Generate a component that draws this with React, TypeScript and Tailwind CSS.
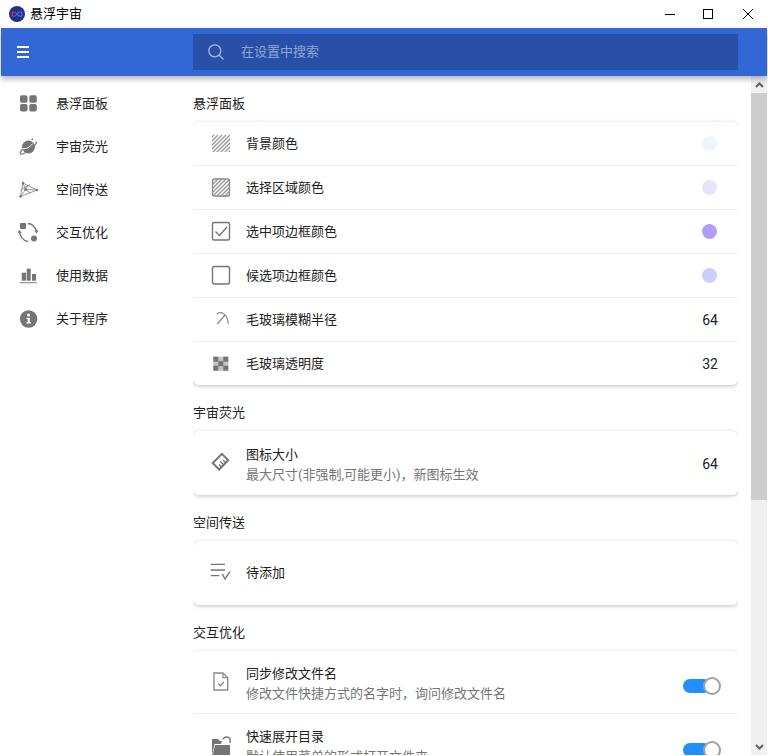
import type { ReactNode } from "react"

const GRAY = "#757575"

function Icon({ children, size = 24 }: { children: ReactNode; size?: number }) {
  return (
    <svg width={size} height={size} viewBox="0 0 24 24" fill="none">
      {children}
    </svg>
  )
}

function Hatch() {
  return (
    <>
      {[-20, -16, -12, -8, -4, 0, 4, 8, 12, 16, 20].map((o) => (
        <path key={o} d={`M${3 + o} 21 L${21 + o} 3`} stroke="#999" strokeWidth="1.300" />
      ))}
    </>
  )
}

const navIcons: Record<string, ReactNode> = {
  grid: (
    <Icon>
      <rect x="4" y="3.300" width="7.500" height="7.500" rx="1.800" fill={GRAY} />
      <rect x="13.300" y="3.300" width="7.500" height="7.500" rx="1.800" fill={GRAY} />
      <rect x="4" y="12" width="7.500" height="7.500" rx="1.800" fill={GRAY} />
      <rect x="13.300" y="12" width="7.500" height="7.500" rx="1.800" fill={GRAY} />
    </Icon>
  ),
  planet: (
    <Icon>
      <circle cx="12.500" cy="12" r="6.500" fill={GRAY} />
      <path d="M6.500 14.500C4.500 16.500 3.800 18 4.500 18.800s3.500-.2 7-2.300 7-5.300 8.300-7.500c.6-1 .7-2 .3-2.500" stroke={GRAY} strokeWidth="1.200" />
      <path d="M6.800 13.500c3 .8 7-1.300 10-5" stroke="#fff" strokeWidth="1" />
      <circle cx="16.300" cy="4.300" r="0.900" fill={GRAY} />
    </Icon>
  ),
  mesh: (
    <Icon>
      <path d="M7 5 L21 12 L4.500 18.500 Z M7 5 L9.500 11.500 L4.500 18.500 M9.500 11.500 L21 12 M12 7.500 L9.500 11.500 L14 15 M4.500 12 L14 6.500" stroke="#8a8a8a" strokeWidth="0.900" />
      <circle cx="7" cy="5" r="1.200" fill={GRAY} />
      <circle cx="4.500" cy="18.500" r="1.200" fill={GRAY} />
      <circle cx="21" cy="12" r="1.200" fill={GRAY} />
      <circle cx="9.500" cy="11.500" r="1.300" fill={GRAY} />
    </Icon>
  ),
  sync: (
    <Icon>
      <rect x="4" y="2" width="6" height="6" rx="0.800" fill={GRAY} />
      <circle cx="18" cy="17.500" r="3" fill={GRAY} />
      <path d="M12 2.500c4.500.3 8 4 8.500 8.500" stroke={GRAY} strokeWidth="1.300" />
      <path d="M18.800 9.500 L20.500 11.500 L22 9.500" stroke={GRAY} strokeWidth="1.100" />
      <path d="M3.500 10c0 5 3.500 10 8.500 10.500" stroke={GRAY} strokeWidth="1.300" />
      <path d="M2 11.800 L3.500 9.800 L5.200 11.800" stroke={GRAY} strokeWidth="1.100" />
    </Icon>
  ),
  bars: (
    <Icon>
      <rect x="5.700" y="8.700" width="4.300" height="8" fill={GRAY} />
      <rect x="10.700" y="4.700" width="4" height="12" fill={GRAY} />
      <rect x="16" y="10" width="4" height="6.700" fill={GRAY} />
      <rect x="4" y="18" width="16.700" height="1.300" fill="#999" />
    </Icon>
  ),
  info: (
    <Icon>
      <circle cx="12.600" cy="12" r="8.700" fill={GRAY} />
      <circle cx="12.600" cy="8" r="1.500" fill="#fff" />
      <path d="M10.500 10.800 H13.800 V15 H15 V16.500 H10.500 V15 H11.700 V12.300 H10.500 Z" fill="#fff" />
    </Icon>
  ),
}

const navItems = [
  { icon: "grid", label: "悬浮面板" },
  { icon: "planet", label: "宇宙荧光" },
  { icon: "mesh", label: "空间传送" },
  { icon: "sync", label: "交互优化" },
  { icon: "bars", label: "使用数据" },
  { icon: "info", label: "关于程序" },
]

const hatchIcon = (
  <Icon>
    <clipPath id="hatch-clip">
      <rect x="3" y="2" width="18" height="18" />
    </clipPath>
    <g clipPath="url(#hatch-clip)">
      <Hatch />
    </g>
  </Icon>
)

const hatchBoxIcon = (
  <Icon>
    <clipPath id="hatch-box-clip">
      <rect x="3" y="2.500" width="18" height="18" rx="2" />
    </clipPath>
    <g clipPath="url(#hatch-box-clip)">
      <Hatch />
    </g>
    <rect x="3.500" y="3" width="17" height="17" rx="2" stroke="#8a8a8a" strokeWidth="1.300" />
  </Icon>
)

const checkBoxIcon = (
  <Icon>
    <rect x="3.500" y="2.500" width="17" height="17.500" rx="1.500" stroke={GRAY} strokeWidth="1.400" />
    <path d="M6.500 11.500 L10.500 15.500 L18 7" stroke={GRAY} strokeWidth="1.400" />
  </Icon>
)

const emptyBoxIcon = (
  <Icon>
    <rect x="3.500" y="2.500" width="17" height="17.500" rx="2" stroke={GRAY} strokeWidth="1.400" />
  </Icon>
)

const pickIcon = (
  <Icon>
    <path d="M7.700 6C12 3 18.500 5 19.300 16" stroke="#8a8a8a" strokeWidth="1.200" />
    <path d="M16 7 L8.300 16" stroke="#8a8a8a" strokeWidth="1.300" />
  </Icon>
)

const checkerIcon = (
  <Icon>
    <rect x="4.300" y="4.700" width="15" height="14" fill="#c4c4c4" />
    {[
      [4.300, 4.700], [14.300, 4.700], [9.300, 9.200], [4.300, 13.700], [14.300, 13.700],
    ].map(([x, y]) => (
      <rect key={`${x}-${y}`} x={x} y={y} width="5" height="5" fill={GRAY} />
    ))}
  </Icon>
)

const rulerIcon = (
  <Icon>
    <g transform="rotate(-45 11.500 10.700)">
      <rect x="5" y="6.200" width="13" height="9" stroke={GRAY} strokeWidth="2" />
      <path d="M8.500 15 V11.500 M11.500 15 V10.500 M14.500 15 V11.500" stroke={GRAY} strokeWidth="1.400" />
    </g>
  </Icon>
)

const listCheckIcon = (
  <Icon>
    <path d="M1.700 3.300 H16 M1.700 9 H16 M1.700 14.700 H10.300" stroke={GRAY} strokeWidth="1.300" />
    <path d="M13.300 13 L16 18 L21 10.700" stroke={GRAY} strokeWidth="1.400" />
  </Icon>
)

const fileCheckIcon = (
  <Icon>
    <path d="M5 3 H14 L18.700 7.700 V20 H5 Z" stroke="#8a8a8a" strokeWidth="1.400" />
    <path d="M14 3 V7.700 H18.700" stroke="#8a8a8a" strokeWidth="1.200" />
    <path d="M9 13.500 L11.300 15.800 L15 11.800" stroke="#8a8a8a" strokeWidth="1.300" />
  </Icon>
)

const folderIcon = (
  <Icon>
    <path d="M3 22 V5 H9 L11 7 H13 L12 10 H5.500 L3 22 Z" fill={GRAY} />
    <path d="M6 11 H21 V22 H3.500 Z" fill={GRAY} />
    <path d="M14 5 C16 2.500 19 2.500 21 4.500 L21 9" stroke={GRAY} strokeWidth="1.400" />
  </Icon>
)

function Swatch({ color }: { color: string }) {
  return <span className="h-[15px] w-[15px] rounded-full" style={{ backgroundColor: color }} />
}

function Value({ children, low }: { children: ReactNode; low?: boolean }) {
  return <span className={`-mr-px text-sm text-[#212121] ${low ? "mt-[2px]" : ""}`}>{children}</span>
}

function Toggle() {
  return (
    <span className="relative -mr-[4px] mt-[8px] block h-[18px] w-[38px]">
      <span className="absolute left-0 top-[2px] h-[14px] w-[28px] rounded-full bg-[#2090ff]" />
      <span className="absolute right-0 top-0 h-[18px] w-[18px] rounded-full border-2 border-[#a0a0a0] bg-white" />
    </span>
  )
}

function Row({ icon, title, sub, right, h = "h-[44px]" }: { icon: ReactNode; title: string; sub?: string; right?: ReactNode; h?: string }) {
  return (
    <div className={`flex items-center border-b border-[#efefef] pl-4 pr-[21px] last:border-b-0 ${h}`}>
      <span className="mr-[13px] flex w-[24px] shrink-0 justify-center">{icon}</span>
      <div className={`min-w-0 flex-1 leading-[20px] ${sub ? "mt-[2px]" : ""}`}>
        <div className="text-[13px] text-[#212121]">{title}</div>
        {sub && <div className="text-[13px] leading-[19px] text-[#757575]">{sub}</div>}
      </div>
      {right}
    </div>
  )
}

function Section({ title, children }: { title: string; children: ReactNode }) {
  return (
    <section>
      <h2 className="h-[46px] pt-[18px] text-[13px] font-normal leading-[20px] text-[#212121]">{title}</h2>
      <div className="overflow-hidden rounded-md bg-white shadow-[0_1px_4px_rgba(0,0,0,0.25)]">{children}</div>
    </section>
  )
}

export default function App() {
  return (
    <div
      className="flex h-[755px] w-[768px] flex-col overflow-hidden bg-white"
      style={{ fontFamily: '"Roboto", "Noto Sans CJK SC", sans-serif' }}
    >
      {/* Title bar */}
      <div className="flex h-[28px] shrink-0 items-center pl-[9px]">
        <svg width="16" height="16" viewBox="0 0 16 16">
          <circle cx="8" cy="8" r="8" fill="#1f3288" />
          <path d="M8 8C6 5 3 5 3 8s3 3 5 0" fill="none" stroke="#c0387c" strokeWidth="1.200" />
          <path d="M8 8c2-3 5-3 5 0s-3 3-5 0" fill="none" stroke="#4a7be0" strokeWidth="1.200" />
        </svg>
        <span className="ml-[5px] text-[13px] text-black">悬浮宇宙</span>
        <div className="ml-auto flex items-center pr-[15px]">
          <svg width="10" height="10" viewBox="0 0 10 10" className="mr-[28px]"><path d="M0 5.500 H10" stroke="#000" /></svg>
          <svg width="10" height="10" viewBox="0 0 10 10" className="mr-[30px]"><rect x="0.500" y="0.500" width="9" height="9" fill="none" stroke="#000" /></svg>
          <svg width="10" height="10" viewBox="0 0 10 10"><path d="M0 0 L10 10 M10 0 L0 10" stroke="#000" /></svg>
        </div>
      </div>

      {/* App bar */}
      <header className="relative z-10 mx-px flex h-[48px] shrink-0 items-center bg-[#3367d6] shadow-[0_3px_6px_rgba(0,0,0,0.3)]">
        <div className="w-[192px] pl-[16px]">
          <svg width="12" height="12" viewBox="0 0 12 12" className="block"><path d="M0 1 H12 M0 6 H12 M0 11 H12" stroke="#fff" strokeWidth="2" /></svg>
        </div>
        <div className="flex h-[36px] w-[545px] items-center bg-[#2850a8] pl-[15px]">
          <svg width="16" height="17" viewBox="0 0 16 17" fill="none"><circle cx="6.800" cy="6.800" r="6" stroke="#a9bbdf" strokeWidth="1.300" /><path d="M11 11 L15.500 15.500" stroke="#a9bbdf" strokeWidth="1.300" /></svg>
          <span className="ml-[17px] text-[13px] text-[#8fa5d3]">在设置中搜索</span>
        </div>
      </header>

      <div className="flex min-h-0 flex-1">
        {/* Sidebar */}
        <nav className="w-[193px] shrink-0 pl-[16px] pt-[6px]">
          {navItems.map((item) => (
            <div key={item.label} className="flex h-[43px] items-center">
              {navIcons[item.icon]}
              <span className="ml-[16px] text-[13px] text-[#212121]">{item.label}</span>
            </div>
          ))}
        </nav>

        {/* Settings */}
        <main className="w-[545px] shrink-0 overflow-hidden">
          <Section title="悬浮面板">
            <Row icon={hatchIcon} title="背景颜色" right={<Swatch color="#edf6fe" />} />
            <Row icon={hatchBoxIcon} title="选择区域颜色" right={<Swatch color="#e5e4f8" />} />
            <Row icon={checkBoxIcon} title="选中项边框颜色" right={<Swatch color="#b49cfd" />} />
            <Row icon={emptyBoxIcon} title="候选项边框颜色" right={<Swatch color="#cfcdfb" />} />
            <Row icon={pickIcon} title="毛玻璃模糊半径" right={<Value>64</Value>} />
            <Row icon={checkerIcon} title="毛玻璃透明度" right={<Value>32</Value>} h="h-[43px]" />
          </Section>
          <Section title="宇宙荧光">
            <Row icon={rulerIcon} title="图标大小" sub="最大尺寸(非强制,可能更小)，新图标生效" right={<Value low>64</Value>} h="h-[64px]" />
          </Section>
          <Section title="空间传送">
            <Row icon={listCheckIcon} title="待添加" h="h-[64px]" />
          </Section>
          <Section title="交互优化">
            <Row icon={fileCheckIcon} title="同步修改文件名" sub="修改文件快捷方式的名字时，询问修改文件名" right={<Toggle />} h="h-[63px]" />
            <Row icon={folderIcon} title="快速展开目录" sub="默认使用菜单的形式打开文件夹" right={<Toggle />} h="h-[63px]" />
          </Section>
        </main>

        {/* Scrollbar */}
        <div className="ml-[13px] flex w-[16px] shrink-0 flex-col bg-[#f0f0f0]">
          <div className="flex h-[17px] items-center justify-center">
            <svg width="9" height="6" viewBox="0 0 9 6"><path d="M1 5 L4.500 1.500 L8 5" fill="none" stroke="#606060" strokeWidth="2" /></svg>
          </div>
          <div className="h-[407px] bg-[#cdcdcd]" />
          <div className="mt-auto flex h-[17px] items-center justify-center">
            <svg width="9" height="6" viewBox="0 0 9 6"><path d="M1 1 L4.500 4.500 L8 1" fill="none" stroke="#606060" strokeWidth="2" /></svg>
          </div>
        </div>
      </div>
    </div>
  )
}
